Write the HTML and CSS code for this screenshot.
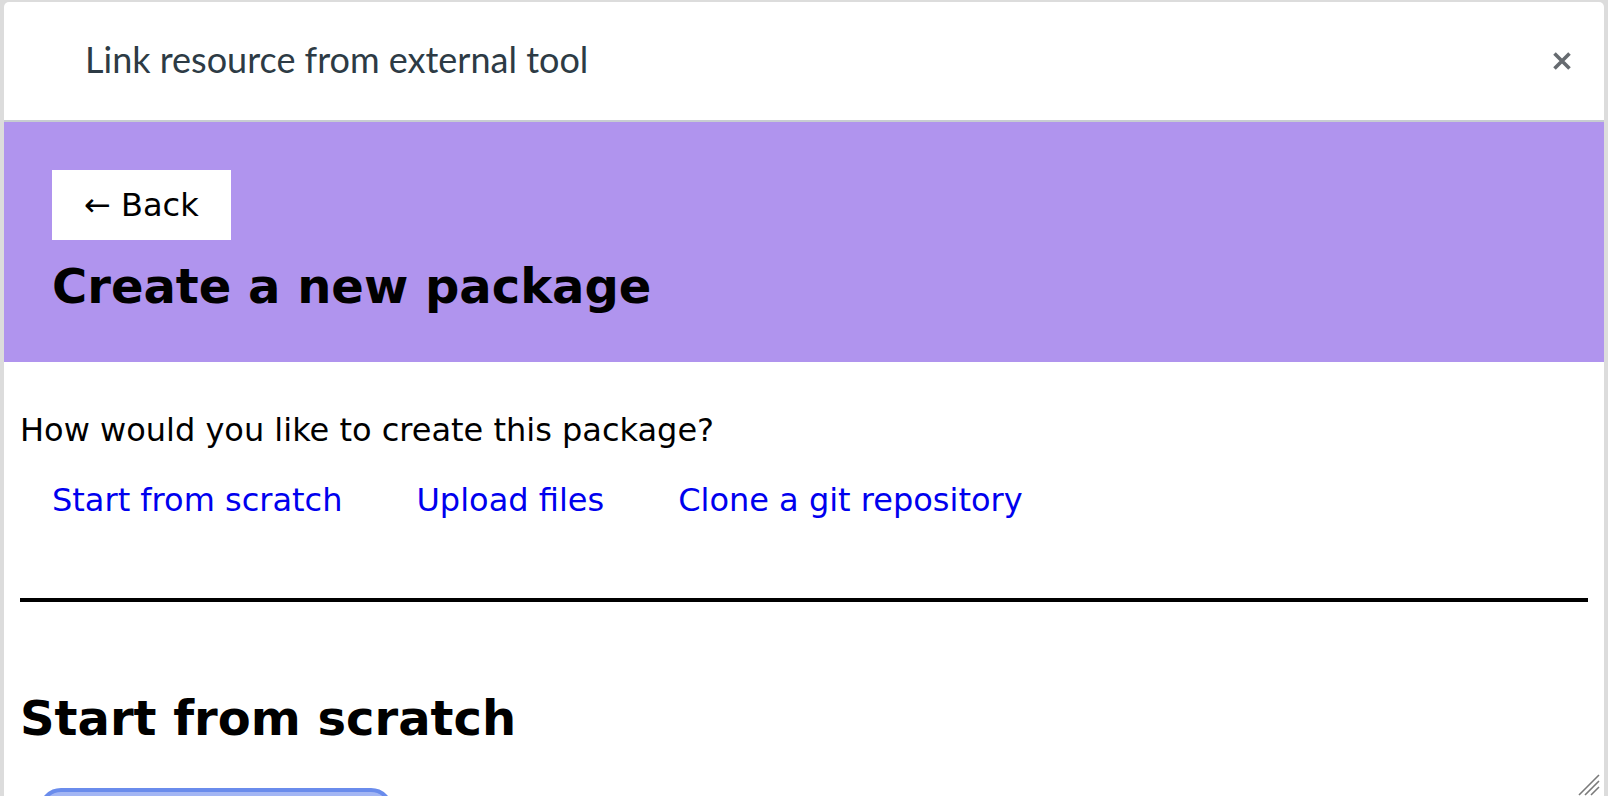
FILE: index.html
```html
<!DOCTYPE html>
<html lang="en">
<head>
<meta charset="utf-8">
<title>Link resource from external tool</title>
<link rel="stylesheet" href="styles.css">
</head>
<body>
  <div class="modal">
    <header class="modal-header">
      <h2 class="modal-title">Link resource from external tool</h2>
      <button class="close" aria-label="Close">
        <svg width="20" height="20" viewBox="0 0 20 20" aria-hidden="true">
          <path d="M2.5 2.5 L17.5 17.5 M17.5 2.5 L2.5 17.5" stroke="#666b70" stroke-width="3.6" stroke-linecap="butt" fill="none"/>
        </svg>
      </button>
    </header>
    <div class="frame">
      <section class="hero">
        <button class="back">← Back</button>
        <h1 class="hero-title">Create a new package</h1>
      </section>
      <main class="content">
        <p class="question">How would you like to create this package?</p>
        <nav class="methods">
          <a href="#scratch" class="method">Start from scratch</a>
          <a href="#upload" class="method">Upload files</a>
          <a href="#git" class="method">Clone a git repository</a>
        </nav>
        <hr class="divider">
        <h2 class="section-title" id="scratch">Start from scratch</h2>
        <div class="pill"></div>
      </main>
      <span class="grip" aria-hidden="true">
        <svg width="26" height="26" viewBox="0 0 26 26">
          <path d="M25 5 L5 25 M25 11 L11 25 M25 17 L17 25" stroke="#7a7a7a" stroke-width="1.6" fill="none"/>
        </svg>
      </span>
    </div>
  </div>
</body>
</html>
```
FILE: styles.css
```css
* {
  box-sizing: border-box;
}

html, body {
  height: 100%;
}

body {
  margin: 0;
  padding: 2px 4px 0 4px;
  background: #dcdcdc;
  overflow: hidden;
  font-family: "DejaVu Sans", sans-serif;
}

.modal {
  position: relative;
  height: 100%;
  background: #ffffff;
  border-radius: 5px 5px 0 0;
  overflow: hidden;
  display: flex;
  flex-direction: column;
}

.modal-header {
  flex: none;
  height: 120px;
  border-bottom: 2px solid #c7cdd1;
  display: flex;
  align-items: center;
  justify-content: space-between;
  padding: 0 32px 0 81px;
}

.modal-title {
  margin: 0;
  padding-bottom: 4px;
  font-family: Lato, "Liberation Sans", sans-serif;
  font-weight: 400;
  font-size: 36px;
  color: #2d3b45;
}

.close {
  border: 0;
  background: none;
  padding: 0;
  width: 20px;
  height: 20px;
  display: flex;
  cursor: pointer;
}

.frame {
  position: relative;
  flex: 1;
  min-height: 0;
  overflow: hidden;
}

.hero {
  background: #b094ee;
  padding: 48px 48px 48px 48px;
}

.back {
  display: block;
  border: 0;
  background: #ffffff;
  color: #000000;
  font-family: "DejaVu Sans", sans-serif;
  font-size: 32px;
  line-height: normal;
  padding: 16px 32px;
  cursor: pointer;
}

.hero-title {
  margin: 18px 0 0 0;
  font-size: 48px;
  font-weight: 700;
  line-height: normal;
  color: #000000;
}

.content {
  padding: 0 16px;
  font-size: 32px;
  color: #000000;
}

.question {
  margin: 49px 0 0 0;
}

.methods {
  display: flex;
  gap: 74px;
  padding-left: 32px;
  margin-top: 32px;
}

.method {
  color: #0000ee;
  text-decoration: none;
}

.divider {
  margin: 79px 0 0 0;
  border: 0;
  border-top: 4px solid #000000;
  height: 0;
}

.section-title {
  margin: 88px 0 0 0;
  font-size: 48px;
  font-weight: 700;
  line-height: normal;
}

.pill {
  margin: 42px 0 0 19px;
  width: 354px;
  height: 64px;
  border: 4px solid #6a8cec;
  background: #a3b6f4;
  border-radius: 22px;
}

.grip {
  position: absolute;
  right: 4px;
  bottom: 0;
  width: 26px;
  height: 26px;
  display: block;
}

.grip svg {
  display: block;
}
```
